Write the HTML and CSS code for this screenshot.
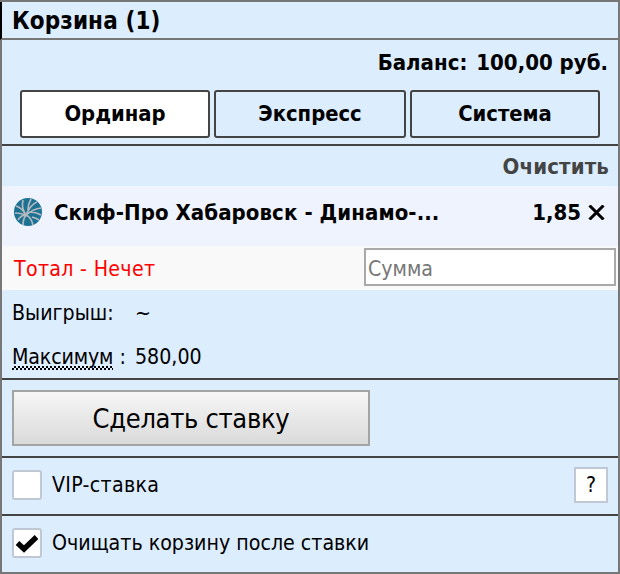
FILE: index.html
```
<!DOCTYPE html>
<html lang="ru">
<head>
<meta charset="utf-8">
<title>Корзина</title>
<link rel="stylesheet" href="styles.css">
</head>
<body>
<section class="coupon">
  <header class="head">Корзина (1)</header>
  <div class="account">
    <div class="balance"><span>Баланс:</span><span>100,00 руб.</span></div>
    <nav class="tabs">
      <button class="tab active">Ординар</button>
      <button class="tab">Экспресс</button>
      <button class="tab">Система</button>
    </nav>
  </div>
  <div class="clear"><span>Очистить</span></div>
  <div class="match">
    <svg class="ball" viewBox="0 0 28 28">
      <circle cx="14" cy="14" r="14" fill="#1c7292"/>
      <g fill="none" stroke="#b4b9c0" stroke-width="1.7">
        <path d="M2 8Q8 10 12 17Q16 7 23 4M9 2Q7 10 12 17M1 15Q6 15 12 17Q19 11 27 10M4 22Q7 17 12 17Q17 19 19 27M9 27Q9 21 12 17M16 14Q22 14 27 17M18 19Q22 20 25 22M14 12Q14 6 17 1"/>
      </g>
    </svg>
    <span class="teams">Скиф-Про Хабаровск - Динамо-...</span>
    <span class="odds">1,85</span>
    <svg class="remove" viewBox="0 0 17 15"><path d="M1.500 0.500L15.500 14.500M15.500 0.500L1.500 14.500" fill="none" stroke="#000" stroke-width="3"/></svg>
  </div>
  <div class="bet">
    <span class="outcome">Тотал - Нечет</span>
    <input class="sum" type="text" placeholder="Сумма">
  </div>
  <div class="totals">
    <div class="line"><span class="label">Выигрыш:</span><span>~</span></div>
    <div class="line"><span class="label"><span class="hint">Максимум</span> :</span><span class="limit">580,00</span></div>
  </div>
  <div class="submit"><button class="place">Сделать ставку</button></div>
  <div class="option">
    <span class="check"></span>
    <span class="caption vip">VIP-ставка</span>
    <button class="help">?</button>
  </div>
  <div class="option last">
    <span class="check"><svg viewBox="0 0 26 26"><path d="M3.500 13L10 19L22.500 7" fill="none" stroke="#000" stroke-width="5.300"/></svg></span>
    <span class="caption">Очищать корзину после ставки</span>
  </div>
</section>
</body>
</html>
```
FILE: styles.css
```
* { box-sizing: border-box; }
body { margin: 0; }
.coupon, .coupon button, .coupon input {
  font-family: "DejaVu Sans Condensed", "DejaVu Sans", sans-serif;
  font-size: 21.2px;
  color: #000;
}
.coupon {
  width: 620px;
  height: 574px;
  border: 2px solid #777;
  background: #dcedfe;
  white-space: nowrap;
}
.head {
  height: 38px;
  margin-left: -2px;
  padding-left: 10px;
  border-left: 2px solid #000;
  border-bottom: 2px solid #777;
  font-weight: bold;
  font-size: 24px;
  line-height: 39px;
  letter-spacing: .1px;
}
.account { height: 106px; border-bottom: 2px solid #444; }
.balance {
  display: flex;
  justify-content: flex-end;
  gap: 9px;
  height: 50px;
  padding-right: 10px;
  font-weight: bold;
  font-size: 22px;
  line-height: 45px;
}
.tabs { display: grid; grid-template-columns: 190px 192px 190px; gap: 4px; padding: 0 18px; }
.coupon .tab {
  height: 48px;
  padding: 0;
  border: 2px solid #444;
  border-radius: 3px;
  background: transparent;
  font-weight: bold;
  font-size: 21.8px;
  line-height: 44px;
}
.coupon .active { background: #fff; }
.clear {
  height: 40px;
  padding-right: 9px;
  text-align: right;
  color: #444;
  font-weight: bold;
  font-size: 22px;
  line-height: 41px;
  letter-spacing: .15px;
}
.match {
  display: flex;
  align-items: center;
  height: 60px;
  padding: 0 13px 8px 12px;
  background: #eef3fd;
  font-weight: bold;
  font-size: 22px;
}
.ball { width: 28px; height: 28px; margin-right: 12px; }
.teams { letter-spacing: .07px; }
.odds { margin-left: auto; margin-right: 7px; }
.remove { width: 17px; height: 15px; margin-top: 1px; }
.bet {
  display: flex;
  align-items: flex-start;
  justify-content: space-between;
  height: 44px;
  padding: 2px 2px 0 12px;
  background: #f9f9f9;
}
.outcome { color: #f00; line-height: 41px; letter-spacing: .3px; }
.coupon .sum {
  width: 252px;
  height: 38px;
  padding: 2px 2px 0;
  border: 2px solid #a9a9a9;
  background: #fff;
  outline: 0;
}
.sum::placeholder { color: #777; opacity: 1; }
.totals { height: 90px; padding-left: 10px; border-bottom: 2px solid #444; }
.line { display: flex; height: 44px; line-height: 45px; }
.label { width: 123px; }
.hint {
  letter-spacing: -.15px;
  padding-bottom: 1px;
  background: conic-gradient(#000 25%, transparent 0 50%, #000 0 75%, transparent 0) left bottom / 4px 4px repeat-x;
}
.submit { height: 78px; padding: 10px; border-bottom: 2px solid #444; }
.coupon .place {
  display: block;
  width: 358px;
  height: 56px;
  padding: 0;
  border: 2px solid #a4a4a4;
  background: linear-gradient(#f6f6f6, #dadada);
  font-size: 27px;
  letter-spacing: -.3px;
}
.option {
  display: flex;
  align-items: center;
  height: 58px;
  padding: 0 10px 2px;
  border-bottom: 2px solid #444;
}
.last { height: 56px; border: 0; }
.check {
  width: 30px;
  height: 30px;
  margin-right: 10px;
  border: 2px solid #c0c8d4;
  border-radius: 3px;
  background: #fff;
}
.check svg { display: block; width: 26px; height: 26px; }
.caption { padding-bottom: 2px; }
.vip { letter-spacing: .3px; }
.coupon .help {
  width: 34px;
  height: 36px;
  margin-left: auto;
  padding: 0;
  border: 2px solid #c0c8d4;
  background: #fff;
  font-size: 21px;
}
```
